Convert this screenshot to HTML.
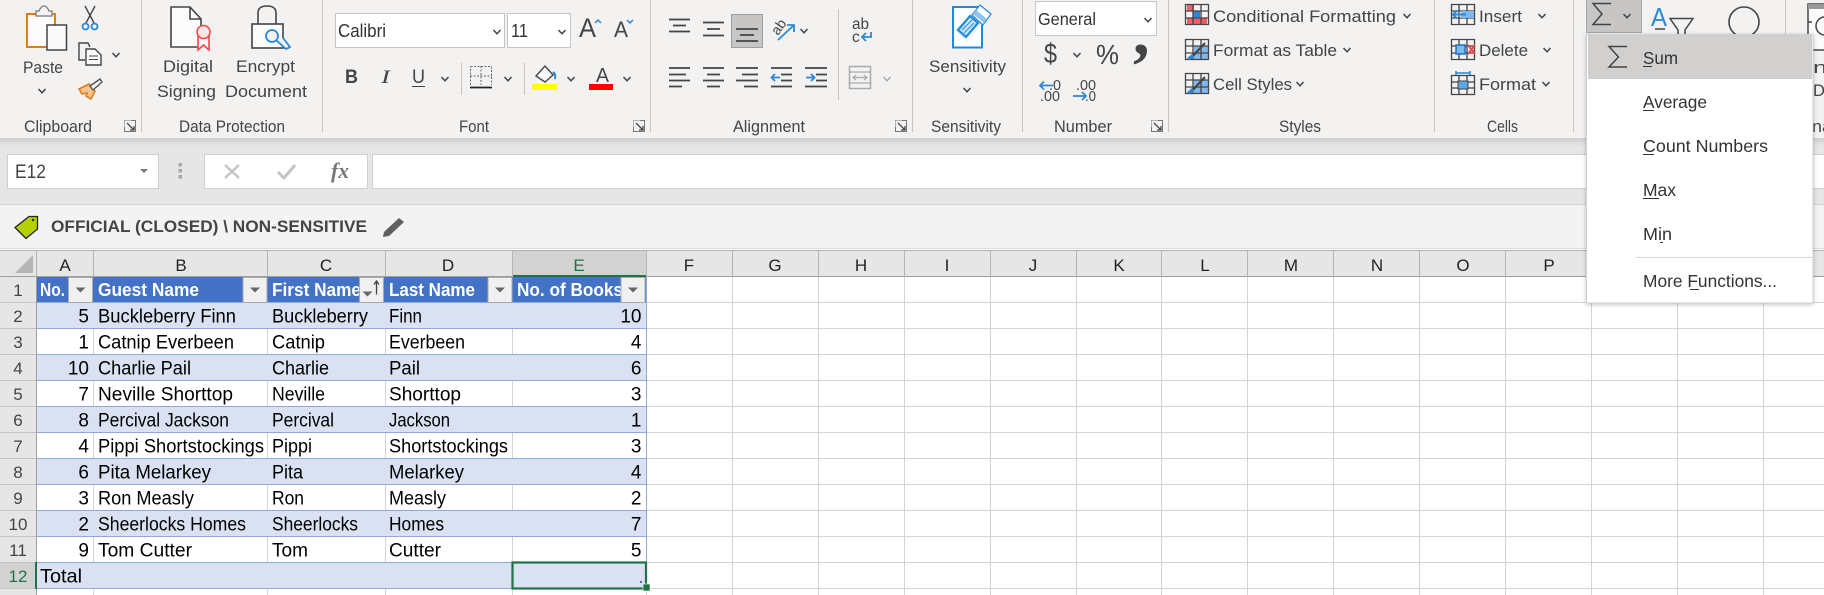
<!DOCTYPE html>
<html lang="en"><head><meta charset="utf-8"><title>Excel</title>
<style>
html,body{margin:0;padding:0;width:1824px;height:595px;overflow:hidden;background:#fff}
svg{display:block}
text{font-family:"Liberation Sans",sans-serif;white-space:pre}
.r{font-size:16.5px;fill:#444}
.m{font-size:17.5px;fill:#333}
.c{font-size:19px;fill:#000}
.h{font-size:18.5px;fill:#fff;font-weight:bold}
.n{font-size:19px;fill:#000;text-anchor:end}
.ch{font-size:17px;fill:#222;text-anchor:middle}
.rh{font-size:17px;fill:#444;text-anchor:middle}
.l{stroke:#444;stroke-width:1.7;fill:none}
.b{stroke:#2b88d8;stroke-width:1.8;fill:none}
</style></head><body>
<svg width="1824" height="595" viewBox="0 0 1824 595" xmlns="http://www.w3.org/2000/svg">
<defs>
<path id="cv" d="M-3.5-2L0 1.8 3.5-2" fill="none" stroke="#444" stroke-width="1.5"/>
<path id="cg" d="M-3.5-2L0 1.8 3.5-2" fill="none" stroke="#aaa" stroke-width="1.5"/>
<g id="la"><path d="M-5.5-5.5H5.5V5.5H-5.5Z" fill="none" stroke="#777" stroke-width="1"/><path d="M-5.5-5.5H1V1H-5.5Z" fill="#f3f2f1"/><path d="M-3-3L4 4M4 0V4H0" fill="none" stroke="#444" stroke-width="1.3"/></g>
<g id="fb"><rect x="0" y="0" width="24" height="25" fill="#f0f0f0" stroke="#a9a9a9"/><path d="M7 10H17L12 15Z" fill="#666"/></g>
<linearGradient id="sh" x1="0" y1="0" x2="0" y2="1"><stop offset="0" stop-color="#cfcfcf"/><stop offset="1" stop-color="#e6e6e6"/></linearGradient>
<filter id="ds" x="-5%" y="-5%" width="110%" height="110%"><feDropShadow dx="0" dy="1" stdDeviation="2" flood-color="#000" flood-opacity=".25"/></filter>
</defs>

<!-- base -->
<rect width="1824" height="595" fill="#fff"/>
<rect width="1824" height="138" fill="#f3f2f1"/>
<rect y="138" width="1824" height="67" fill="#e6e6e6"/>
<rect y="138" width="1824" height="8" fill="url(#sh)"/>

<!-- ribbon separators -->
<g stroke="#c8c6c4" stroke-width="1">
<path d="M141.5 0V132M322.5 0V132M650.5 0V132M912.5 0V132M1022.5 0V132M1168.5 0V132M1434.5 0V132M1573.5 0V132M1785.5 0V132M461.5 63V95M524.5 63V95M838.5 9V100"/>
</g>

<!-- Clipboard -->
<rect x="27" y="14" width="28" height="33" fill="#fbfbfb" stroke="#e07b1a" stroke-width="2"/>
<path d="M36 16V11H39Q41 6 44 6T49 11H52V16Z" fill="#f3f2f1" stroke="#777" stroke-width="1.2"/>
<rect x="47" y="25" width="19.500" height="25" fill="#fafafa" stroke="#444" stroke-width="1.5"/>
<text x="23" y="73" class="r" textLength="40" lengthAdjust="spacingAndGlyphs">Paste</text>
<use href="#cv" x="42" y="91"/>
<path d="M85 6L94 23M95 6L86 23" stroke="#444" stroke-width="1.4" fill="none"/>
<circle cx="85.500" cy="26.500" r="3" class="b"/><circle cx="94.500" cy="26.500" r="3" class="b"/>
<path d="M85 60H79V43H88L90 47" fill="none" stroke="#444" stroke-width="1.4"/>
<path d="M86 49H95L101 55V65H86Z" fill="#fbfbfb" stroke="#444" stroke-width="1.4"/><path d="M89 56H98M89 59.500H98" stroke="#444" stroke-width="1"/>
<use href="#cv" x="116" y="55"/>
<path d="M79 89L89 84L95 91L91 99L86 96L87 93L82 94Z" fill="#f6c48d" stroke="#e07b1a" stroke-width="1.6"/>
<path d="M90 86L100 79L102 82L93 90Z" fill="#f3f2f1" stroke="#555" stroke-width="1.4"/>
<text x="24" y="132" class="r" textLength="68" lengthAdjust="spacingAndGlyphs">Clipboard</text>
<use href="#la" x="130" y="126"/>

<!-- Data Protection -->
<path d="M171 7H190L201 19V47H171Z" fill="#fbfbfb" stroke="#444" stroke-width="1.600"/><path d="M190 7V19H201" fill="none" stroke="#444" stroke-width="1.600"/>
<path d="M198 36V50L203.500 45L209 50V36" fill="#fbfbfb" stroke="#f0454f" stroke-width="1.600"/>
<circle cx="203.500" cy="32" r="6.500" fill="#fbe6e6" stroke="#f0454f" stroke-width="1.600"/>
<text x="163" y="72" class="r" textLength="50" lengthAdjust="spacingAndGlyphs">Digital</text>
<text x="157" y="97" class="r" textLength="59" lengthAdjust="spacingAndGlyphs">Signing</text>
<rect x="252" y="24" width="31" height="24" fill="#fbfbfb" stroke="#444" stroke-width="1.600"/>
<path d="M258 24V13Q258 6 267 6T276 13V24" fill="none" stroke="#444" stroke-width="1.600"/>
<circle cx="272" cy="36" r="6" fill="#f3f2f1" stroke="#2b88d8" stroke-width="1.800"/>
<path d="M276 40L286 49L290 47L283 38" fill="#f3f2f1" stroke="#2b88d8" stroke-width="1.800"/>
<text x="236" y="72" class="r" textLength="59" lengthAdjust="spacingAndGlyphs">Encrypt</text>
<text x="225" y="97" class="r" textLength="82" lengthAdjust="spacingAndGlyphs">Document</text>
<text x="179" y="132" class="r" textLength="106" lengthAdjust="spacingAndGlyphs">Data Protection</text>

<!-- Font -->
<rect x="335.500" y="13.500" width="169" height="34" fill="#fff" stroke="#c8c6c4"/>
<rect x="507.500" y="13.500" width="63" height="34" fill="#fff" stroke="#c8c6c4"/>
<text x="338" y="37" font-size="18.500" fill="#333" textLength="48" lengthAdjust="spacingAndGlyphs">Calibri</text>
<text x="511" y="37" font-size="18.500" fill="#333" textLength="17" lengthAdjust="spacingAndGlyphs">11</text>
<use href="#cv" x="497" y="32"/><use href="#cv" x="562" y="32"/>
<text x="579" y="37" font-size="27" fill="#444" textLength="17" lengthAdjust="spacingAndGlyphs">A</text>
<path d="M595 23L598 20 601 23" fill="none" stroke="#2b88d8" stroke-width="1.500"/>
<text x="614" y="37" font-size="22" fill="#444" textLength="14" lengthAdjust="spacingAndGlyphs">A</text>
<path d="M627 20L630 23 633 20" fill="none" stroke="#2b88d8" stroke-width="1.500"/>
<text x="345" y="83" font-size="19" font-weight="bold" fill="#444" textLength="13" lengthAdjust="spacingAndGlyphs">B</text>
<text x="381" y="83" font-size="19" font-style="italic" fill="#444" textLength="9" lengthAdjust="spacingAndGlyphs" style="font-family:'Liberation Serif',serif">I</text>
<text x="412" y="83" font-size="19" fill="#444" textLength="13" lengthAdjust="spacingAndGlyphs">U</text>
<path d="M412 86.500H425" stroke="#444" stroke-width="1"/>
<use href="#cv" x="445" y="79"/>
<path d="M470.500 66.500H491.500V85M470.500 85V66.500M481 66V85M470 76H492" fill="none" stroke="#666" stroke-width="1" stroke-dasharray="2 1.500"/>
<path d="M470 87.500H492" stroke="#222" stroke-width="1.800"/>
<use href="#cv" x="508" y="79"/>
<path d="M536 76L545 66L553 75L545 82Z" fill="#fbfbfb" stroke="#444" stroke-width="1.400"/><path d="M553 72Q556 74 555 79" stroke="#2b88d8" stroke-width="2" fill="none"/>
<rect x="532" y="84" width="25" height="6" fill="#ffff00"/>
<use href="#cv" x="571" y="79"/>
<text x="596" y="82" font-size="20" fill="#444" textLength="13" lengthAdjust="spacingAndGlyphs">A</text>
<rect x="589" y="84" width="24" height="6" fill="#ff0000"/>
<use href="#cv" x="627" y="79"/>
<text x="459" y="132" class="r" textLength="30" lengthAdjust="spacingAndGlyphs">Font</text>
<use href="#la" x="639" y="126"/>

<!-- Alignment -->
<rect x="731.500" y="14.500" width="31" height="33" fill="#c8c6c4" stroke="#a0a0a0"/>
<path class="l" d="M669 19.500H690M673 25.500H686M669 31.500H690"/>
<path class="l" d="M703 22.500H724M707 29H720M703 35.500H724"/>
<path class="l" d="M736 29H758M740 35H754M736 41H758"/>
<text x="0" y="0" transform="translate(778 36) rotate(-55)" font-size="14" fill="#444">ab</text>
<path d="M778 40L794 25M787 25H794V32" class="b"/>
<use href="#cv" x="804" y="31"/>
<text x="852" y="29" font-size="15.500" fill="#444" textLength="17" lengthAdjust="spacingAndGlyphs">ab</text>
<text x="852" y="42" font-size="15.500" fill="#444">c</text>
<path d="M871 32V37H863M866 33L862 37 866 41" class="b"/>
<path class="l" d="M669 68H690M669 74.500H686M669 80.500H690M669 86.500H682"/>
<path class="l" d="M703 68H724M707 74.500H720M703 80.500H724M707 86.500H720"/>
<path class="l" d="M736 68H758M742 74.500H758M736 80.500H758M744 86.500H758"/>
<path class="l" d="M771 68H792M781 74.500H792M781 80.500H792M771 86.500H792"/>
<path d="M780 77.500H772M775 74L771.500 77.500 775 81" class="b"/>
<path class="l" d="M805 68H827M816 74.500H827M816 80.500H827M805 86.500H827"/>
<path d="M806 77.500H814M811 74L814.500 77.500 811 81" class="b"/>
<rect x="849.500" y="66.500" width="21" height="22" fill="#f3f2f1" stroke="#aaa" stroke-width="1.500"/>
<path d="M849 72H871M849 83H871M853 77.500H867M856 75L853 77.500 856 80M864 75L867 77.500 864 80" stroke="#aaa" stroke-width="1.200" fill="none"/>
<use href="#cg" x="887" y="79"/>
<text x="733" y="132" class="r" textLength="72" lengthAdjust="spacingAndGlyphs">Alignment</text>
<use href="#la" x="901" y="126"/>

<!-- Sensitivity -->
<path d="M953 7H982V47.500H953Z" fill="#fbfdff" stroke="#1e8bd8" stroke-width="2"/>
<path d="M957 33L975 12 985 20 967 42Z" fill="#f3f2f1"/>
<path d="M958 30L970 16 978 23 966 37Z" fill="#cde6f7" stroke="#1e8bd8" stroke-width="2.200"/>
<path d="M962 30L972 20M964 33L974 23" stroke="#1e8bd8" stroke-width="1"/>
<path d="M972 15L980 5 991 14 983 25Z" fill="#fff" stroke="#2b88d8" stroke-width="1.200"/><path d="M976 10L987 19L984 23L973 14Z" fill="#8cc4ee"/>
<text x="929" y="72" class="r" textLength="77" lengthAdjust="spacingAndGlyphs">Sensitivity</text>
<use href="#cv" x="967" y="90"/>
<text x="931" y="132" class="r" textLength="70" lengthAdjust="spacingAndGlyphs">Sensitivity</text>

<!-- Number -->
<rect x="1035.500" y="1.500" width="121" height="34" fill="#fff" stroke="#c8c6c4"/>
<text x="1038" y="25" font-size="17.500" fill="#333" textLength="58" lengthAdjust="spacingAndGlyphs">General</text>
<use href="#cv" x="1148" y="20"/>
<text x="1044" y="63" font-size="28" fill="#444" textLength="13" lengthAdjust="spacingAndGlyphs">$</text>
<use href="#cv" x="1077" y="55"/>
<text x="1096" y="64" font-size="28" fill="#444" textLength="23" lengthAdjust="spacingAndGlyphs">%</text>
<text x="1133" y="54" font-size="66" font-weight="bold" fill="#444" style="font-family:'Liberation Serif',serif">,</text>
<text x="1049" y="90" font-size="14.500" fill="#444" textLength="12" lengthAdjust="spacingAndGlyphs">.0</text>
<text x="1040" y="101" font-size="14.500" fill="#444" textLength="20" lengthAdjust="spacingAndGlyphs">.00</text>
<path d="M1053 85.500H1040M1044 81.500L1040 85.500 1044 89.500" class="b"/>
<text x="1076" y="90" font-size="14.500" fill="#444" textLength="20" lengthAdjust="spacingAndGlyphs">.00</text>
<text x="1085" y="101" font-size="14.500" fill="#444" textLength="11" lengthAdjust="spacingAndGlyphs">.0</text>
<path d="M1073 96H1086M1082 92L1086 96 1082 100" class="b"/>
<text x="1054" y="132" class="r" textLength="58" lengthAdjust="spacingAndGlyphs">Number</text>
<use href="#la" x="1157" y="126"/>

<!-- Styles -->
<rect x="1187" y="5" width="7" height="6" fill="#f0606a"/><rect x="1187" y="18" width="20" height="6" fill="#f0606a"/><rect x="1193" y="11" width="7" height="7" fill="#2b88d8"/>
<rect x="1194" y="46" width="14" height="13" fill="#7fb8ec"/>
<rect x="1194" y="80" width="14" height="13" fill="#7fb8ec"/>
<g fill="none" stroke="#444" stroke-width="1.300">
<path d="M1185.500 4.500H1208.500V24.500H1185.500ZM1185 11H1209M1185 18H1209M1193 4V25M1201 4V25"/>
<path d="M1185.500 39.500H1208.500V59.500H1185.500ZM1185 46H1209M1185 53H1209M1193 39V60M1201 39V60"/>
<path d="M1185.500 73.500H1208.500V93.500H1185.500ZM1185 80H1209M1185 87H1209M1193 73V94M1201 73V94"/>
</g>
<path d="M1190 59L1205 43" stroke="#444" stroke-width="2.200"/><path d="M1187 58L1192 54 1194 57 1189 60Z" fill="#2b88d8"/>
<path d="M1190 93L1205 77" stroke="#444" stroke-width="2.200"/><path d="M1187 92L1192 88 1194 91 1189 94Z" fill="#2b88d8"/>
<text x="1213" y="22" class="r" textLength="183" lengthAdjust="spacingAndGlyphs">Conditional Formatting</text>
<use href="#cv" x="1407" y="16"/>
<text x="1213" y="56" class="r" textLength="124" lengthAdjust="spacingAndGlyphs">Format as Table</text>
<use href="#cv" x="1347" y="50"/>
<text x="1213" y="90" class="r" textLength="79" lengthAdjust="spacingAndGlyphs">Cell Styles</text>
<use href="#cv" x="1300" y="84"/>
<text x="1279" y="132" class="r" textLength="42" lengthAdjust="spacingAndGlyphs">Styles</text>

<!-- Cells -->
<g fill="none" stroke="#444" stroke-width="1.300">
<path d="M1451.500 4.500H1474.500V24.500H1451.500ZM1451 11H1475M1451 18H1475M1459 4V25M1467 4V25"/>
<path d="M1451.500 39.500H1474.500V59.500H1451.500ZM1451 46H1475M1451 53H1475M1459 39V60M1467 39V60"/>
<path d="M1451.500 75.500H1474.500V94.500H1451.500ZM1451 82H1475M1451 88H1475M1459 75V95M1467 75V95"/>
</g>
<rect x="1461" y="11" width="13" height="7" fill="#7fb8ec"/><path d="M1466 14.500H1453M1457 10.500L1453 14.500 1457 18.500" stroke="#2b88d8" stroke-width="2" fill="#f3f2f1"/>
<rect x="1456" y="45" width="9" height="9" fill="#7fb8ec" stroke="#1e6fbf" stroke-width="1.500"/><path d="M1468 45L1475 54M1475 45L1468 54" stroke="#f0454f" stroke-width="2"/>
<path d="M1456 73H1470M1456 71V75M1470 71V75" stroke="#2b88d8" stroke-width="1.500"/><rect x="1458" y="81" width="10" height="8" fill="#5aa7e6" stroke="#444"/>
<text x="1479" y="22" class="r" textLength="43" lengthAdjust="spacingAndGlyphs">Insert</text><use href="#cv" x="1542" y="16"/>
<text x="1479" y="56" class="r" textLength="49" lengthAdjust="spacingAndGlyphs">Delete</text><use href="#cv" x="1547" y="50"/>
<text x="1479" y="90" class="r" textLength="57" lengthAdjust="spacingAndGlyphs">Format</text><use href="#cv" x="1546" y="84"/>
<text x="1487" y="132" class="r" textLength="31" lengthAdjust="spacingAndGlyphs">Cells</text>

<!-- Editing -->
<rect x="1586.500" y="-1" width="55" height="33.500" fill="#c8c6c4" stroke="#a6a6a6"/>
<path d="M1611 3.500H1593L1602 14L1593 24.500H1611" fill="none" stroke="#444" stroke-width="1.500"/>
<use href="#cv" x="1627" y="16"/>
<text x="1651" y="26" font-size="26" fill="#2b88d8" textLength="16" lengthAdjust="spacingAndGlyphs">A</text>
<path d="M1655 29H1665" stroke="#444" stroke-width="1.500"/>
<path d="M1670 18.500H1693L1685 30V36H1678V30Z" fill="none" stroke="#444" stroke-width="1.500"/>
<circle cx="1744" cy="22" r="15" fill="none" stroke="#444" stroke-width="1.600"/>
<rect x="1808" y="4" width="17" height="46" fill="#fbfbfb" stroke="#444" stroke-width="1.500"/>
<rect x="1808" y="4" width="17" height="5" fill="#999"/>
<path d="M1808 22H1812" stroke="#444" stroke-width="1.500"/>
<circle cx="1825" cy="26" r="9" fill="#fbfbfb" stroke="#444" stroke-width="1.500"/>
<text x="1813" y="73" class="r" textLength="14" lengthAdjust="spacingAndGlyphs">n</text>
<text x="1813" y="96" class="r">D</text>
<text x="1812" y="132" class="r" textLength="20" lengthAdjust="spacingAndGlyphs">na</text>

<!-- Formula bar -->
<rect x="7.500" y="154.500" width="151" height="34" fill="#fff" stroke="#cfcfcf"/>
<text x="15" y="178" font-size="19" fill="#444" textLength="31" lengthAdjust="spacingAndGlyphs">E12</text>
<path d="M140 169H148L144 173Z" fill="#777"/>
<g fill="#a8a8a8"><rect x="178.500" y="163" width="3.500" height="3.500"/><rect x="178.500" y="169" width="3.500" height="3.500"/><rect x="178.500" y="175" width="3.500" height="3.500"/></g>
<rect x="204.500" y="154.500" width="163" height="34" fill="#fff" stroke="#cfcfcf"/>
<path d="M225 165L239 178M239 165L225 178" stroke="#c4c4c4" stroke-width="2.400"/>
<path d="M278 172L284 178 295 165" fill="none" stroke="#c4c4c4" stroke-width="3"/>
<text x="331" y="178" font-size="22" font-weight="bold" font-style="italic" fill="#777" style="font-family:'Liberation Serif',serif" textLength="18" lengthAdjust="spacingAndGlyphs">fx</text>
<rect x="372.500" y="154.500" width="1460" height="34" fill="#fff" stroke="#cfcfcf"/>

<!-- Label bar -->
<rect x="0" y="205" width="1824" height="44" fill="#f3f3f3"/>
<path d="M0 204.500H1824" stroke="#d4d4d4"/>
<path d="M0 248.500H1824" stroke="#dcdcdc"/>
<path d="M15 227.500L29 216.500H37.500V229L26 238.500Z" fill="#b5d000" stroke="#222" stroke-width="1.300"/><circle cx="33" cy="220" r="1.200" fill="#222"/>
<text x="51" y="232" font-size="17" font-weight="bold" fill="#444" textLength="316" lengthAdjust="spacingAndGlyphs">OFFICIAL (CLOSED) \ NON-SENSITIVE</text>
<path d="M384 232L399 218 404 222 389 236 383 237Z" fill="#5f5f5f"/>

<!-- Col header -->
<rect x="0" y="250" width="1824" height="27" fill="#e6e6e6"/>
<path d="M0 250.500H1824" stroke="#b0b0b0"/>
<path d="M0 276.500H1824" stroke="#9e9e9e"/>
<path d="M15 273L33 255V273Z" fill="#b4b4b4"/>
<rect x="512" y="251" width="134" height="26" fill="#d2d2d2"/>
<path d="M512 276H646" stroke="#217346" stroke-width="2"/>
<g stroke="#b4b4b4"><path d="M36.500 251V277M93.500 251V277M267.500 251V277M385.500 251V277M512.500 251V277M646.500 251V277M732.500 251V277M818.500 251V277M904.500 251V277M990.500 251V277M1076.500 251V277M1161.500 251V277M1247.500 251V277M1333.500 251V277M1419.500 251V277M1505.500 251V277M1591.500 251V277M1677.500 251V277M1763.500 251V277"/></g>
<text x="65" y="271" class="ch">A</text><text x="181" y="271" class="ch">B</text><text x="326" y="271" class="ch">C</text><text x="448" y="271" class="ch">D</text><text x="579" y="271" class="ch" style="fill:#217346">E</text>
<text x="689" y="271" class="ch">F</text><text x="775" y="271" class="ch">G</text><text x="861" y="271" class="ch">H</text><text x="947" y="271" class="ch">I</text><text x="1033" y="271" class="ch">J</text><text x="1119" y="271" class="ch">K</text><text x="1205" y="271" class="ch">L</text><text x="1291" y="271" class="ch">M</text><text x="1377" y="271" class="ch">N</text><text x="1463" y="271" class="ch">O</text><text x="1549" y="271" class="ch">P</text>

<!-- Row header -->
<rect x="0" y="277" width="36" height="318" fill="#e6e6e6"/>
<rect x="0" y="562" width="36" height="26" fill="#d2d2d2"/>
<g stroke="#c4c4c4"><path d="M0 302.500H36M0 328.500H36M0 354.500H36M0 380.500H36M0 406.500H36M0 432.500H36M0 458.500H36M0 484.500H36M0 510.500H36M0 536.500H36M0 562.500H36M0 588.500H36"/></g>
<path d="M36.500 277V595" stroke="#9e9e9e"/>
<path d="M36 562V589" stroke="#217346" stroke-width="2"/>
<text x="18" y="296" class="rh">1</text><text x="18" y="322" class="rh">2</text><text x="18" y="348" class="rh">3</text><text x="18" y="374" class="rh">4</text><text x="18" y="400" class="rh">5</text><text x="18" y="426" class="rh">6</text><text x="18" y="452" class="rh">7</text><text x="18" y="478" class="rh">8</text><text x="18" y="504" class="rh">9</text><text x="18" y="530" class="rh">10</text><text x="18" y="556" class="rh">11</text><text x="18" y="582" class="rh" style="fill:#217346">12</text>

<!-- Grid -->
<g stroke="#d4d4d4"><path d="M37 302.500H1824M37 328.500H1824M37 354.500H1824M37 380.500H1824M37 406.500H1824M37 432.500H1824M37 458.500H1824M37 484.500H1824M37 510.500H1824M37 536.500H1824M37 562.500H1824M37 588.500H1824"/>
<path d="M93.500 277V595M267.500 277V595M385.500 277V595M512.500 277V595M646.500 277V595M732.500 277V595M818.500 277V595M904.500 277V595M990.500 277V595M1076.500 277V595M1161.500 277V595M1247.500 277V595M1333.500 277V595M1419.500 277V595M1505.500 277V595M1591.500 277V595M1677.500 277V595M1763.500 277V595"/></g>

<!-- Table -->
<rect x="37" y="277" width="609" height="25" fill="#4472c4"/>
<g fill="#d9e1f2"><rect x="37" y="303" width="609" height="25"/><rect x="37" y="355" width="609" height="25"/><rect x="37" y="407" width="609" height="25"/><rect x="37" y="459" width="609" height="25"/><rect x="37" y="511" width="609" height="25"/><rect x="37" y="563" width="609" height="25"/></g>
<g stroke="#8ea9db"><path d="M37 328.500H646M37 354.500H646M37 380.500H646M37 406.500H646M37 432.500H646M37 458.500H646M37 484.500H646M37 510.500H646M37 536.500H646M37 562.500H646M37 588.500H646M37 302.500H646M646.500 277V589"/></g>

<text x="40" y="296" class="h" textLength="25" lengthAdjust="spacingAndGlyphs">No.</text>
<text x="98" y="296" class="h" textLength="101" lengthAdjust="spacingAndGlyphs">Guest Name</text>
<text x="272" y="296" class="h" textLength="89" lengthAdjust="spacingAndGlyphs">First Name</text>
<text x="389" y="296" class="h" textLength="86" lengthAdjust="spacingAndGlyphs">Last Name</text>
<text x="517" y="296" class="h" textLength="106" lengthAdjust="spacingAndGlyphs">No. of Books</text>
<use href="#fb" x="68.500" y="277.500"/><use href="#fb" x="243" y="277.500"/>
<g transform="translate(359.500 277.500)"><rect width="24" height="25" fill="#f0f0f0" stroke="#a9a9a9"/><path d="M3 14H13L8 19Z" fill="#666"/><path d="M17 17V4M14.500 7L17 3.500 19.500 7" fill="none" stroke="#444" stroke-width="1.300"/></g>
<use href="#fb" x="488" y="277.500"/><use href="#fb" x="621" y="277.500"/>

<!-- rows -->
<g transform="translate(0 .6)">
<text x="89" y="322" class="n">5</text><text x="98" y="322" class="c" textLength="138" lengthAdjust="spacingAndGlyphs">Buckleberry Finn</text><text x="272" y="322" class="c" textLength="96" lengthAdjust="spacingAndGlyphs">Buckleberry</text><text x="389" y="322" class="c" textLength="33" lengthAdjust="spacingAndGlyphs">Finn</text><text x="641.500" y="322" class="n">10</text>
<text x="89" y="348" class="n">1</text><text x="98" y="348" class="c" textLength="136" lengthAdjust="spacingAndGlyphs">Catnip Everbeen</text><text x="272" y="348" class="c" textLength="53" lengthAdjust="spacingAndGlyphs">Catnip</text><text x="389" y="348" class="c" textLength="76" lengthAdjust="spacingAndGlyphs">Everbeen</text><text x="641.500" y="348" class="n">4</text>
<text x="89" y="374" class="n">10</text><text x="98" y="374" class="c" textLength="93" lengthAdjust="spacingAndGlyphs">Charlie Pail</text><text x="272" y="374" class="c" textLength="57" lengthAdjust="spacingAndGlyphs">Charlie</text><text x="389" y="374" class="c" textLength="31" lengthAdjust="spacingAndGlyphs">Pail</text><text x="641.500" y="374" class="n">6</text>
<text x="89" y="400" class="n">7</text><text x="98" y="400" class="c" textLength="135" lengthAdjust="spacingAndGlyphs">Neville Shorttop</text><text x="272" y="400" class="c" textLength="53" lengthAdjust="spacingAndGlyphs">Neville</text><text x="389" y="400" class="c" textLength="72" lengthAdjust="spacingAndGlyphs">Shorttop</text><text x="641.500" y="400" class="n">3</text>
<text x="89" y="426" class="n">8</text><text x="98" y="426" class="c" textLength="131" lengthAdjust="spacingAndGlyphs">Percival Jackson</text><text x="272" y="426" class="c" textLength="62" lengthAdjust="spacingAndGlyphs">Percival</text><text x="389" y="426" class="c" textLength="61" lengthAdjust="spacingAndGlyphs">Jackson</text><text x="641.500" y="426" class="n">1</text>
<text x="89" y="452" class="n">4</text><text x="98" y="452" class="c" textLength="166" lengthAdjust="spacingAndGlyphs">Pippi Shortstockings</text><text x="272" y="452" class="c" textLength="40" lengthAdjust="spacingAndGlyphs">Pippi</text><text x="389" y="452" class="c" textLength="119" lengthAdjust="spacingAndGlyphs">Shortstockings</text><text x="641.500" y="452" class="n">3</text>
<text x="89" y="478" class="n">6</text><text x="98" y="478" class="c" textLength="113" lengthAdjust="spacingAndGlyphs">Pita Melarkey</text><text x="272" y="478" class="c" textLength="31" lengthAdjust="spacingAndGlyphs">Pita</text><text x="389" y="478" class="c" textLength="75" lengthAdjust="spacingAndGlyphs">Melarkey</text><text x="641.500" y="478" class="n">4</text>
<text x="89" y="504" class="n">3</text><text x="98" y="504" class="c" textLength="96" lengthAdjust="spacingAndGlyphs">Ron Measly</text><text x="272" y="504" class="c" textLength="32" lengthAdjust="spacingAndGlyphs">Ron</text><text x="389" y="504" class="c" textLength="57" lengthAdjust="spacingAndGlyphs">Measly</text><text x="641.500" y="504" class="n">2</text>
<text x="89" y="530" class="n">2</text><text x="98" y="530" class="c" textLength="148" lengthAdjust="spacingAndGlyphs">Sheerlocks Homes</text><text x="272" y="530" class="c" textLength="86" lengthAdjust="spacingAndGlyphs">Sheerlocks</text><text x="389" y="530" class="c" textLength="55" lengthAdjust="spacingAndGlyphs">Homes</text><text x="641.500" y="530" class="n">7</text>
<text x="89" y="556" class="n">9</text><text x="98" y="556" class="c" textLength="94" lengthAdjust="spacingAndGlyphs">Tom Cutter</text><text x="272" y="556" class="c" textLength="36" lengthAdjust="spacingAndGlyphs">Tom</text><text x="389" y="556" class="c" textLength="52" lengthAdjust="spacingAndGlyphs">Cutter</text><text x="641.500" y="556" class="n">5</text>
<text x="40" y="582" class="c" textLength="42" lengthAdjust="spacingAndGlyphs">Total</text>
</g>

<!-- selection -->
<rect x="512.500" y="562.500" width="133.500" height="26" fill="none" stroke="#217346" stroke-width="2.200"/>
<rect x="640" y="581" width="2" height="2" fill="#4472c4"/><rect x="643" y="584" width="7" height="7" fill="#217346" stroke="#fff" stroke-width=".6"/>

<!-- dropdown -->
<rect x="1586.500" y="34.500" width="226.500" height="268.500" fill="#fff" stroke="#d0d0d0" filter="url(#ds)"/>
<rect x="1588" y="35" width="224" height="44" fill="#d2d0ce"/>
<path d="M1627 46.500H1609L1618.500 57L1609 67H1627" fill="none" stroke="#444" stroke-width="1.500"/>
<text x="1643" y="64" class="m" textLength="35" lengthAdjust="spacingAndGlyphs">Sum</text><path d="M1643 66.500H1652" stroke="#333"/>
<text x="1643" y="108" class="m" textLength="64" lengthAdjust="spacingAndGlyphs">Average</text><path d="M1643 110.500H1654" stroke="#333"/>
<text x="1643" y="152" class="m" textLength="125" lengthAdjust="spacingAndGlyphs">Count Numbers</text><path d="M1643 154.500H1654" stroke="#333"/>
<text x="1643" y="196" class="m" textLength="33" lengthAdjust="spacingAndGlyphs">Max</text><path d="M1643 198.500H1659" stroke="#333"/>
<text x="1643" y="240" class="m" textLength="29" lengthAdjust="spacingAndGlyphs">Min</text><path d="M1660 242.500H1663" stroke="#333"/>
<path d="M1636 257.500H1812" stroke="#d8d8d8"/>
<text x="1643" y="287" class="m" textLength="134" lengthAdjust="spacingAndGlyphs">More Functions...</text><path d="M1690 289.500H1699" stroke="#333"/>
</svg>
</body></html>
